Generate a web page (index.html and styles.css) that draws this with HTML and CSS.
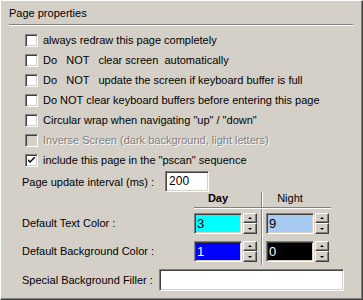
FILE: index.html
```html
<!DOCTYPE html>
<html lang="en">
<head>
    <meta charset="UTF-8">
    <title>Page properties</title>
    <link rel="stylesheet" href="styles.css">
</head>
<body>
    <div class="window">
        <div class="group-title">Page properties</div>
        <div class="separator"></div>

        <div class="checks">
            <label class="check-row"><span class="box"></span><span class="caption">always redraw this page completely</span></label>
            <label class="check-row"><span class="box"></span><span class="caption">Do   NOT   clear screen  automatically</span></label>
            <label class="check-row"><span class="box"></span><span class="caption">Do   NOT   update the screen if keyboard buffer is full</span></label>
            <label class="check-row"><span class="box"></span><span class="caption">Do NOT clear keyboard buffers before entering this page</span></label>
            <label class="check-row"><span class="box"></span><span class="caption">Circular wrap when navigating "up" / "down"</span></label>
            <label class="check-row disabled"><span class="box"></span><span class="caption">Inverse Screen (dark background, light letters)</span></label>
            <label class="check-row"><span class="box checked">
                <svg width="7" height="7" viewBox="0 0 7 7"><path d="M0 2 L0 4 L2 6 L7 1 L7 -1 L2 4 Z" fill="#000"/></svg>
            </span><span class="caption">include this page in the "pscan" sequence</span></label>
        </div>

        <div class="interval-row">
            <span class="field-label">Page update interval (ms) :</span>
            <span class="edit interval-edit">200</span>
        </div>

        <div class="colors">
            <div class="col-head day-head">Day</div>
            <div class="divider"></div>
            <div class="col-head night-head">Night</div>
            <div class="head-line"></div>

            <div class="field-label row1">Default Text Color :</div>
            <div class="spin row1 day-col"><span class="edit color-edit cyan">3</span><span class="spin-btns"><span class="btn up"></span><span class="btn down"></span></span></div>
            <div class="spin row1 night-col"><span class="edit color-edit skyblue">9</span><span class="spin-btns"><span class="btn up"></span><span class="btn down"></span></span></div>

            <div class="field-label row2">Default Background Color :</div>
            <div class="spin row2 day-col"><span class="edit color-edit blue">1</span><span class="spin-btns"><span class="btn up"></span><span class="btn down"></span></span></div>
            <div class="spin row2 night-col"><span class="edit color-edit black">0</span><span class="spin-btns"><span class="btn up"></span><span class="btn down"></span></span></div>
        </div>

        <div class="filler-row">
            <span class="field-label">Special Background Filler :</span>
            <span class="edit filler-edit"></span>
        </div>
    </div>
</body>
</html>
```

FILE: styles.css
```css
* {
    margin: 0;
    padding: 0;
    box-sizing: border-box;
}

body {
    width: 363px;
    height: 300px;
    overflow: hidden;
    font-family: "Liberation Sans", Arial, sans-serif;
    font-size: 11px;
    color: #000;
    background: #d4d0c8;
}

.window {
    width: 363px;
    height: 300px;
    border: 1px solid;
    border-color: #fff #404040 #404040 #fff;
    box-shadow: inset -1px -1px #808080;
    padding: 6px 0 0 8px;
}

.group-title {
    height: 13px;
    line-height: 13px;
}

.separator {
    margin-top: 4px;
    width: 344px;
    height: 2px;
    border-top: 1px solid #808080;
    border-bottom: 1px solid #fff;
}

.checks {
    margin-top: 4px;
    padding-left: 16px;
}

.check-row {
    display: flex;
    align-items: center;
    height: 20px;
}

.box {
    width: 13px;
    height: 13px;
    flex: none;
    background: #fff;
    border: 1px solid;
    border-color: #808080 #fff #fff #808080;
    box-shadow: inset 1px 1px #404040, inset -1px -1px #d4d0c8;
    display: flex;
    align-items: center;
    justify-content: center;
}

.box svg {
    display: block;
}

.caption {
    margin-left: 5px;
    white-space: pre;
}

.check-row.disabled .box {
    background: #d4d0c8;
}

.check-row.disabled .caption {
    color: #808080;
    text-shadow: 1px 1px #fff;
}

.field-label {
    white-space: pre;
}

.edit {
    display: block;
    height: 21px;
    line-height: 19px;
    padding-left: 3px;
    background: #fff;
    border: 1px solid;
    border-color: #808080 #fff #fff #808080;
    box-shadow: inset 1px 1px #404040, inset -1px -1px #d4d0c8;
    font-size: 12px;
}

.interval-row {
    display: flex;
    align-items: center;
    padding-left: 13px;
    margin-top: 1px;
    height: 21px;
}

.interval-edit {
    margin-left: 11px;
    width: 44px;
}

.colors {
    display: grid;
    grid-template-columns: 172px 63px 9px 63px;
    grid-template-rows: 17px 2px 4px 21px 7px 21px 3px;
    padding-left: 13px;
    margin-top: -2px;
}

.col-head {
    grid-row: 1;
    width: 48px;
    text-align: center;
    line-height: 17px;
}

.day-head {
    grid-column: 2;
    font-weight: bold;
}

.night-head {
    grid-column: 4;
}

.head-line {
    grid-row: 2;
    grid-column: 2 / 5;
    width: 137px;
    border-top: 1px solid #808080;
    border-bottom: 1px solid #fff;
}

.divider {
    grid-column: 3;
    grid-row: 1 / 8;
    width: 2px;
    margin-left: 4px;
    margin-top: 2px;
    border-left: 1px solid #808080;
    border-right: 1px solid #fff;
}

.colors .field-label {
    grid-column: 1;
    line-height: 21px;
}

.row1 {
    grid-row: 4;
}

.row2 {
    grid-row: 6;
}

.day-col {
    grid-column: 2;
}

.night-col {
    grid-column: 4;
}

.spin {
    display: flex;
}

.color-edit {
    width: 48px;
    padding-left: 2px;
    font-size: 13px;
}

.cyan {
    background: #00ffff;
}

.skyblue {
    background: #a6caf0;
}

.blue {
    background: #0000ff;
    color: #fff;
}

.black {
    background: #000;
    color: #fff;
}

.spin-btns {
    margin-left: 1px;
    display: flex;
    flex-direction: column;
}

.btn {
    width: 14px;
    height: 10px;
    border: 1px solid;
    border-color: #fff #404040 #404040 #fff;
    box-shadow: inset -1px -1px #808080;
    display: flex;
    align-items: center;
    justify-content: center;
}

.btn.down {
    height: 11px;
}

.btn::after {
    content: "";
    border-left: 2px solid transparent;
    border-right: 2px solid transparent;
}

.btn.up::after {
    border-bottom: 2px solid #000;
}

.btn.down::after {
    border-top: 2px solid #000;
}

.filler-row {
    display: flex;
    align-items: center;
    padding-left: 13px;
    margin-top: 4px;
    height: 22px;
}

.filler-edit {
    margin-left: 6px;
    width: 185px;
    height: 22px;
}
```
